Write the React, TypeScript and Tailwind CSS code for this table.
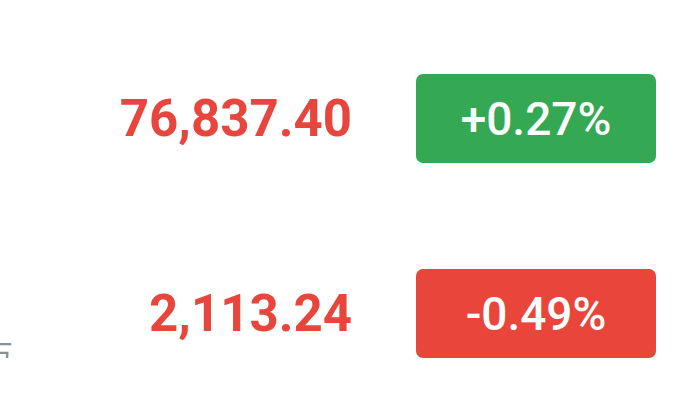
const quotes = [
  { label: '', price: '76,837.40', change: '+0.27%', up: true },
  { label: '万', price: '2,113.24', change: '-0.49%', up: false },
]

export default function App() {
  return (
    <div
      className="flex h-[400px] w-[686px] flex-col gap-[106px] overflow-hidden bg-white pt-[74px]"
      style={{ fontFamily: 'Roboto, "Noto Sans CJK SC", sans-serif' }}
    >
      {quotes.map((q) => (
        <div key={q.price} className="flex h-[89px] items-center pr-[30px]">
          <div className="flex h-full w-[12px] shrink-0 items-center justify-end overflow-hidden">
            {q.label && (
              <span
                className="mr-[-1px] mt-[78px] shrink-0 text-[30px] leading-none text-[#8a8f94]"
                style={{ fontFamily: '"Noto Sans CJK SC", sans-serif' }}
              >
                {q.label}
              </span>
            )}
          </div>
          <div className="flex-1 text-right text-[51px] font-bold leading-none text-[#e8453c]">
            {q.price}
          </div>
          <div
            className={`ml-[64px] flex h-[89px] w-[240px] shrink-0 items-center justify-center rounded-[7px] text-[46px] font-medium leading-none text-white ${
              q.up ? 'bg-[#34a853]' : 'bg-[#e9453b]'
            }`}
          >
            {q.change}
          </div>
        </div>
      ))}
    </div>
  )
}
